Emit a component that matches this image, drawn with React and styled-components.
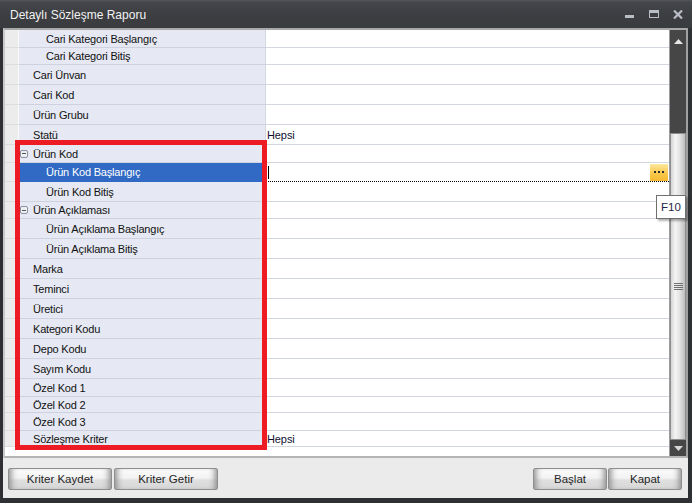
import React from 'react';
import styled, { createGlobalStyle } from 'styled-components';

const Global = createGlobalStyle`
  html, body { margin: 0; padding: 0; background: #2c2d31; }
  body { font-family: "Liberation Sans", Arial, sans-serif; }
`;

const Window = styled.div`
  position: relative;
  width: 692px;
  height: 503px;
  background: #2f3034;
  display: flex;
  flex-direction: column;
  overflow: hidden;
`;

const TitleBar = styled.div`
  height: 28px;
  flex: none;
  display: flex;
  align-items: center;
  justify-content: space-between;
  padding: 0 10px;
  box-sizing: border-box;
  background: linear-gradient(#55575c 0px, #45474c 2px, #3c3e42 14px, #393b3f 100%);
`;

const Title = styled.span`
  color: #f2f2f2;
  font-size: 12px;
  margin-top: 1px;
`;

const Controls = styled.div`
  display: flex;
  align-items: center;
  gap: 14px;
  margin-right: -1px;
`;

const Body = styled.div`
  flex: 1;
  margin: 0 4px 5px 3px;
  background: #ebebeb;
  display: flex;
  flex-direction: column;
`;

const GridFrame = styled.div`
  height: 430px;
  flex: none;
  box-sizing: border-box;
  border-top: 2px solid #a9a9a9;
  border-left: 2px solid #c9c9c9;
  border-right: 2px solid #a0a0a0;
  border-bottom: 2px solid #b4b4b4;
  display: flex;
`;

const Grid = styled.div`
  width: 664px;
  background: #ffffff;
  border-right: 1px solid #9c9c9c;
  display: flex;
  flex-direction: column;
`;

const Row = styled.div`
  display: grid;
  grid-template-columns: 14px 247px 1fr;
  height: ${p => p.$h}px;
  flex: none;
`;

const Indicator = styled.div`
  background: #ececec;
  border-bottom: 1px solid #dcdcdc;
  border-right: 1px solid #f8f8f8;
`;

const Label = styled.div`
  background: ${p => (p.$selected ? '#316ac5' : '#e6e9f3')};
  color: ${p => (p.$selected ? '#ffffff' : '#111111')};
  border-bottom: 1px solid ${p => (p.$selected ? '#316ac5' : '#cdd2de')};
  border-right: 1px solid #d3d7e1;
  display: flex;
  align-items: center;
  padding-left: ${p => (p.$level === 2 ? 27 : 14)}px;
  font-size: 11px;
  letter-spacing: -0.2px;
  white-space: nowrap;
  position: relative;
`;

const Value = styled.div`
  border-bottom: 1px solid #d2d7e1;
  display: flex;
  align-items: center;
  padding-left: 1px;
  font-size: 11px;
  letter-spacing: -0.1px;
  color: #101030;
  position: relative;
`;

const EditValue = styled.div`
  border-top: 1px dotted #000;
  border-bottom: 1px dotted #000;
  margin-top: -1px;
  display: flex;
  align-items: center;
  justify-content: space-between;
  padding-left: 2px;
`;

const Caret = styled.span`
  width: 1px;
  height: 13px;
  background: #000;
`;

const EllipsisButton = styled.div`
  width: 18px;
  height: 17px;
  background: linear-gradient(#fde8a0, #f9c84a 55%, #f6b932);
  display: flex;
  align-items: center;
  justify-content: center;
  gap: 2px;
  margin-right: 1px;
`;

const Dot = styled.span`
  width: 2px;
  height: 2px;
  background: #2a2a2a;
`;

const Collapse = styled.span`
  position: absolute;
  left: 1px;
  top: 50%;
  margin-top: -4px;
  width: 8px;
  height: 8px;
  border: 1px solid #8a8f9c;
  border-radius: 2px;
  box-sizing: border-box;
  background: #eef0f6;
  &::after {
    content: '';
    position: absolute;
    left: 1px;
    right: 1px;
    top: 2.5px;
    height: 1px;
    background: #555;
  }
`;

const Filler = styled.div`
  flex: 1;
  background: #fff;
`;

const Scrollbar = styled.div`
  width: 16px;
  background: #464646;
  display: flex;
  flex-direction: column;
  align-items: stretch;
`;

const ArrowBox = styled.div`
  height: ${p => p.$h}px;
  display: flex;
  align-items: center;
  justify-content: center;
  flex: none;
`;

const Thumb = styled.div`
  height: 307px;
  flex: none;
  background: linear-gradient(90deg, #d4d4d4 0%, #f4f4f4 30%, #e4e4e4 60%, #bdbdbd 100%);
  border: 1px solid #8d8d8d;
  box-sizing: border-box;
  display: flex;
  flex-direction: column;
  align-items: center;
  justify-content: center;
  gap: 1px;
  margin-top: 79px;
`;

const Grip = styled.span`
  width: 9px;
  height: 1px;
  background: #6e6e6e;
`;

const Track = styled.div`
  flex: 1;
`;

const BottomPanel = styled.div`
  flex: 1;
  display: flex;
  align-items: flex-start;
  justify-content: space-between;
  padding: 10px 6px 0 5px;
`;

const ButtonGroup = styled.div`
  display: flex;
  gap: ${p => p.$gap}px;
`;

const Button = styled.div`
  width: ${p => p.$w}px;
  height: 22px;
  box-sizing: border-box;
  border: 1px solid #8e8e8e;
  border-radius: 2px;
  background: linear-gradient(#fbfbfb 0%, #f3f3f3 45%, #e0e0e0 55%, #d6d6d6 100%);
  box-shadow: inset 7px 0 6px -5px #8a8a8a, inset -7px 0 6px -5px #8a8a8a;
  display: flex;
  align-items: center;
  justify-content: center;
  font-size: 11.5px;
  color: #262626;
`;

const RedBox = styled.div`
  position: absolute;
  left: 15px;
  top: 140px;
  width: 252px;
  height: 310px;
  box-sizing: border-box;
  border: 5px solid #ed1c24;
  pointer-events: none;
`;

const Tooltip = styled.div`
  position: absolute;
  left: 656px;
  top: 195px;
  width: 30px;
  height: 24px;
  box-sizing: border-box;
  background: #fff;
  border: 1px solid #707070;
  box-shadow: 2px 2px 2px rgba(0, 0, 0, 0.3);
  display: flex;
  align-items: center;
  justify-content: center;
  font-size: 11.5px;
  color: #26264a;
`;

const rows = [
  { label: 'Cari Kategori Başlangıç', level: 2, h: 18 },
  { label: 'Cari Kategori Bitiş', level: 2, h: 17 },
  { label: 'Cari Ünvan', level: 1, h: 20 },
  { label: 'Cari Kod', level: 1, h: 20 },
  { label: 'Ürün Grubu', level: 1, h: 20 },
  { label: 'Statü', level: 1, h: 20, value: 'Hepsi' },
  { label: 'Ürün Kod', level: 1, h: 18, group: true },
  { label: 'Ürün Kod Başlangıç', level: 2, h: 19, selected: true },
  { label: 'Ürün Kod Bitiş', level: 2, h: 20 },
  { label: 'Ürün Açıklaması', level: 1, h: 17, group: true },
  { label: 'Ürün Açıklama Başlangıç', level: 2, h: 20 },
  { label: 'Ürün Açıklama Bitiş', level: 2, h: 20 },
  { label: 'Marka', level: 1, h: 20 },
  { label: 'Teminci', level: 1, h: 20 },
  { label: 'Üretici', level: 1, h: 20 },
  { label: 'Kategori Kodu', level: 1, h: 20 },
  { label: 'Depo Kodu', level: 1, h: 20 },
  { label: 'Sayım Kodu', level: 1, h: 20 },
  { label: 'Özel Kod 1', level: 1, h: 18 },
  { label: 'Özel Kod 2', level: 1, h: 16 },
  { label: 'Özel Kod 3', level: 1, h: 18 },
  { label: 'Sözleşme Kriter', level: 1, h: 16, value: 'Hepsi' },
];

export default function App() {
  return (
    <>
      <Global />
      <Window>
        <TitleBar>
          <Title>Detaylı Sözleşme Raporu</Title>
          <Controls>
            <svg width="10" height="10" viewBox="0 0 10 10">
              <rect x="0" y="6" width="9" height="3" fill="#b9bdc5" />
            </svg>
            <svg width="10" height="9" viewBox="0 0 10 9">
              <rect x="0.5" y="0.5" width="9" height="7" fill="none" stroke="#b9bdc5" />
              <rect x="0" y="0" width="10" height="3" fill="#b9bdc5" />
            </svg>
            <svg width="10" height="9" viewBox="0 0 10 9">
              <path d="M1 0.5 L9 8.5 M9 0.5 L1 8.5" stroke="#b9bdc5" strokeWidth="2.2" />
            </svg>
          </Controls>
        </TitleBar>
        <Body>
          <GridFrame>
            <Grid>
              {rows.map(r => (
                <Row key={r.label} $h={r.h}>
                  <Indicator />
                  <Label $level={r.level} $selected={r.selected}>
                    {r.group && <Collapse />}
                    {r.label}
                  </Label>
                  {r.selected ? (
                    <EditValue>
                      <Caret />
                      <EllipsisButton>
                        <Dot />
                        <Dot />
                        <Dot />
                      </EllipsisButton>
                    </EditValue>
                  ) : (
                    <Value>{r.value}</Value>
                  )}
                </Row>
              ))}
              <Filler />
            </Grid>
            <Scrollbar>
              <ArrowBox $h={24}>
                <svg width="9" height="6" viewBox="0 0 9 6">
                  <path d="M4.5 0 L9 5 L0 5 Z" fill="#e6e6e6" />
                </svg>
              </ArrowBox>
              <Thumb>
                <Grip />
                <Grip />
                <Grip />
                <Grip />
              </Thumb>
              <Track />
              <ArrowBox $h={16}>
                <svg width="9" height="5" viewBox="0 0 9 5">
                  <path d="M0 0 L9 0 L4.5 5 Z" fill="#d8d8d8" />
                </svg>
              </ArrowBox>
            </Scrollbar>
          </GridFrame>
          <BottomPanel>
            <ButtonGroup $gap={2}>
              <Button $w={104}>Kriter Kaydet</Button>
              <Button $w={104}>Kriter Getir</Button>
            </ButtonGroup>
            <ButtonGroup $gap={1}>
              <Button $w={74}>Başlat</Button>
              <Button $w={74}>Kapat</Button>
            </ButtonGroup>
          </BottomPanel>
        </Body>
        <RedBox />
        <Tooltip>F10</Tooltip>
      </Window>
    </>
  );
}
